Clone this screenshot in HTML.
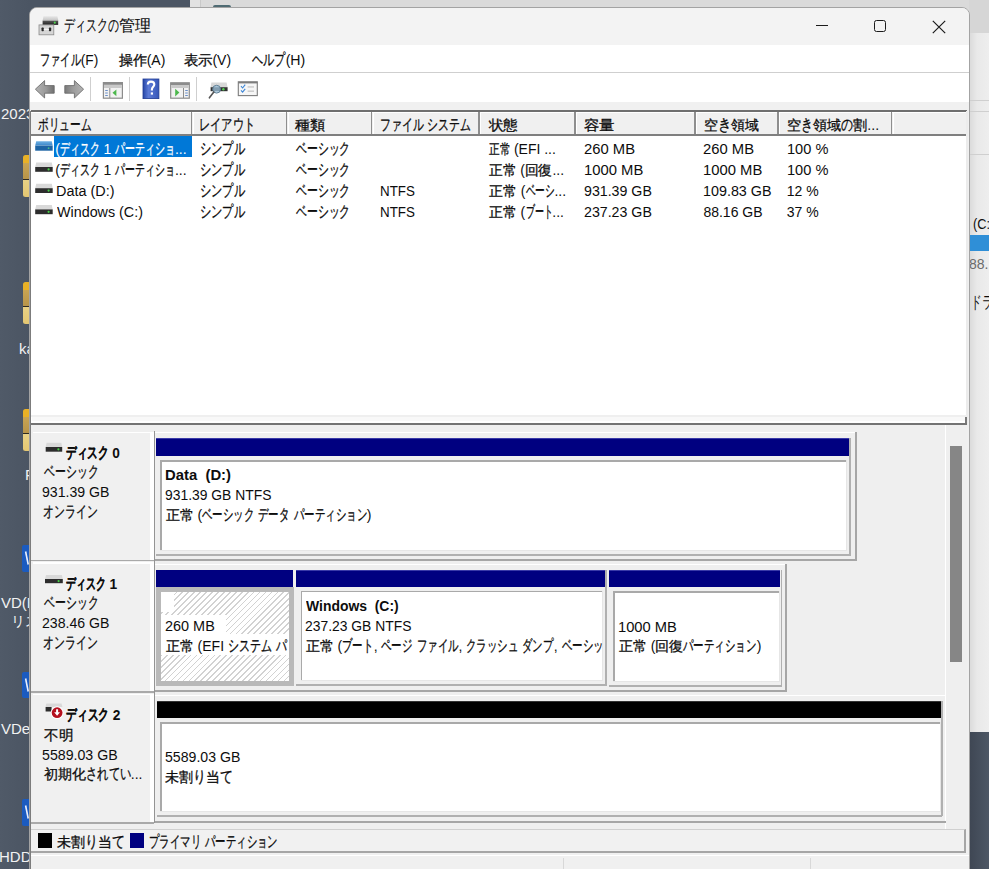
<!DOCTYPE html>
<html><head><meta charset="utf-8">
<style>
*{margin:0;padding:0;box-sizing:border-box}
html,body{width:989px;height:869px;overflow:hidden}
body{position:relative;background:#4b5563;font-family:"Liberation Sans",sans-serif;font-size:14px;color:#000}
.a{position:absolute}
.t{position:absolute;white-space:pre;line-height:1;transform-origin:0 0;color:#0d0d0d}
.dt{color:#f2f2f2;font-size:15px}
.j,.k{-webkit-text-stroke:0.3px currentColor}
.b .j,.b .k{-webkit-text-stroke:0.1px currentColor}
.ns .j,.ns .k{-webkit-text-stroke:0.15px currentColor}
</style></head><body>
<div class="a" style="left:0px;top:0px;width:989px;height:869px;background:linear-gradient(90deg,#505a68 0,#4b5563 30px,#4b5563 100%);"></div>
<div class="a" style="left:190px;top:0px;width:799px;height:33px;background:#dadada;"></div>
<div class="a" style="left:190px;top:0px;width:11px;height:33px;background:#e2e2e2;"></div>
<div class="a" style="left:200px;top:-10px;width:60px;height:43px;background:transparent;border-left:1px solid #c9c9c9;border-top:1px solid #c9c9c9;border-radius:10px 0 0 0"></div>
<div class="a" style="left:213px;top:4.5px;width:18px;height:2.5px;background:#4f6b73;border-radius:2px 2px 0 0"></div>
<div class="a" style="left:969px;top:0px;width:20px;height:33px;background:#d6d6d6;"></div>
<div class="a" style="left:969px;top:33px;width:20px;height:699px;background:linear-gradient(90deg,#d9d9d9 0,#e9e9e9 40%,#eeeeee 100%);"></div>
<div class="a" style="left:969px;top:99.5px;width:20px;height:1.0px;background:#cfcfcf;"></div>
<div class="a" style="left:969px;top:111px;width:20px;height:1px;background:#cfcfcf;"></div>
<div class="a" style="left:969px;top:153.5px;width:20px;height:1.0px;background:#cfcfcf;"></div>
<div class="a" style="left:969px;top:235px;width:20px;height:16px;background:#2f8fd7;"></div>
<div class="a" style="left:22.6px;top:155px;width:8.4px;height:41.5px;background:linear-gradient(180deg,#e9b126 0,#e9b126 19%,#c9a452 19%,#b8954a 56%,#2e2a22 56%,#2e2a22 60%,#e8d185 60%,#e4c772 100%);border-radius:2.5px"></div>
<div class="a" style="left:22.6px;top:282px;width:8.4px;height:41.5px;background:linear-gradient(180deg,#e9b126 0,#e9b126 19%,#c9a452 19%,#b8954a 56%,#2e2a22 56%,#2e2a22 60%,#e8d185 60%,#e4c772 100%);border-radius:2.5px"></div>
<div class="a" style="left:22.6px;top:409px;width:8.4px;height:41.5px;background:linear-gradient(180deg,#e9b126 0,#e9b126 19%,#c9a452 19%,#b8954a 56%,#2e2a22 56%,#2e2a22 60%,#e8d185 60%,#e4c772 100%);border-radius:2.5px"></div>
<div class="a" style="left:22px;top:545px;width:9px;height:27px;background:#1b5bc0;border-radius:2px"></div>
<svg class="a" style="left:22px;top:545px" width="9" height="27"><path d="M3.6 6.5L6.2 19.5" stroke="#e8eefc" stroke-width="1.6"/></svg><div class="a" style="left:22px;top:672px;width:9px;height:26px;background:#1b5bc0;border-radius:2px"></div>
<svg class="a" style="left:22px;top:672px" width="9" height="26"><path d="M3.6 6.5L6.2 19.5" stroke="#e8eefc" stroke-width="1.6"/></svg><div class="a" style="left:22px;top:799px;width:9px;height:27px;background:#1b5bc0;border-radius:2px"></div>
<svg class="a" style="left:22px;top:799px" width="9" height="27"><path d="M3.6 6.5L6.2 19.5" stroke="#e8eefc" stroke-width="1.6"/></svg><div class="t dt" style="left:1px;top:105.6px">2023</div>
<div class="t dt" style="left:19px;top:340.5px">ka</div>
<div class="t dt" style="left:25px;top:467px">F</div>
<div class="t dt" style="left:1px;top:594.5px">VD(E</div>
<div class="t dt" style="left:11px;top:614px;font-size:14px">リス</div>
<div class="t dt" style="left:1px;top:721px">VDe</div>
<div class="t dt" style="left:-1px;top:848.5px">HDD</div>
<div class="t" style="left:972.5px;top:216px;font-size:15px;transform:scaleX(.85)">(C:</div>
<div class="t" style="left:969px;top:256.5px;font-size:14px;color:#6b6b6b">88.1</div>
<div class="t" style="left:970.5px;top:294px;font-size:17px;transform:scaleX(.62)">ドラ</div>
<div class="a" style="left:29px;top:6.5px;width:940.5px;height:873.5px;background:#f0f0f0;border:1px solid #a3a3a3;border-radius:8px 8px 0 0;box-sizing:border-box"></div>
<div class="a" style="left:30px;top:7.5px;width:938.5px;height:37.5px;background:#f3f3f3;border-radius:7px 7px 0 0"></div>
<div class="a" style="left:30px;top:45px;width:938.5px;height:27px;background:#ffffff;"></div>
<div class="a" style="left:30px;top:72.2px;width:938.5px;height:1.7px;background:#cfcfcf;"></div>
<div class="a" style="left:30px;top:73px;width:938.5px;height:29px;background:#ffffff;"></div>
<div class="a" style="left:90px;top:76.5px;width:1px;height:24.0px;background:#cfcfcf;"></div>
<div class="a" style="left:129px;top:76.5px;width:1px;height:24.0px;background:#cfcfcf;"></div>
<div class="a" style="left:196px;top:76.5px;width:1px;height:24.0px;background:#cfcfcf;"></div>
<div class="a" style="left:30px;top:102px;width:938.5px;height:8px;background:#f0f0f0;"></div>
<div class="a" style="left:30.5px;top:110px;width:936.0px;height:314.8px;background:#ffffff;"></div>
<div class="a" style="left:30.5px;top:110px;width:936.0px;height:2px;background:#6f6f6f;"></div>
<div class="a" style="left:30.5px;top:112px;width:936.0px;height:21.7px;background:#f0f0f0;"></div>
<div class="a" style="left:30.5px;top:112.4px;width:936.0px;height:1.0px;background:#ffffff;"></div>
<div class="a" style="left:30.5px;top:133.7px;width:936.0px;height:1.9px;background:#7f7f7f;"></div>
<div class="a" style="left:966.0px;top:110.5px;width:2.0px;height:314.3px;background:#ececec;"></div>
<div class="a" style="left:965.0px;top:417px;width:1.5px;height:7.8px;background:#7a7a7a;"></div>
<div class="a" style="left:190.7px;top:112px;width:1.8px;height:21.7px;background:#8e8e8e;"></div>
<div class="a" style="left:192.5px;top:112px;width:1.2px;height:21.7px;background:#ffffff;"></div>
<div class="a" style="left:285.7px;top:112px;width:1.8px;height:21.7px;background:#8e8e8e;"></div>
<div class="a" style="left:287.5px;top:112px;width:1.2px;height:21.7px;background:#ffffff;"></div>
<div class="a" style="left:370.7px;top:112px;width:1.8px;height:21.7px;background:#8e8e8e;"></div>
<div class="a" style="left:372.5px;top:112px;width:1.2px;height:21.7px;background:#ffffff;"></div>
<div class="a" style="left:478.2px;top:112px;width:1.8px;height:21.7px;background:#8e8e8e;"></div>
<div class="a" style="left:480px;top:112px;width:1.2px;height:21.7px;background:#ffffff;"></div>
<div class="a" style="left:574.2px;top:112px;width:1.8px;height:21.7px;background:#8e8e8e;"></div>
<div class="a" style="left:576px;top:112px;width:1.2px;height:21.7px;background:#ffffff;"></div>
<div class="a" style="left:694.2px;top:112px;width:1.8px;height:21.7px;background:#8e8e8e;"></div>
<div class="a" style="left:696px;top:112px;width:1.2px;height:21.7px;background:#ffffff;"></div>
<div class="a" style="left:777.2px;top:112px;width:1.8px;height:21.7px;background:#8e8e8e;"></div>
<div class="a" style="left:779px;top:112px;width:1.2px;height:21.7px;background:#ffffff;"></div>
<div class="a" style="left:890.7px;top:112px;width:1.8px;height:21.7px;background:#8e8e8e;"></div>
<div class="a" style="left:892.5px;top:112px;width:1.2px;height:21.7px;background:#ffffff;"></div>
<div class="a" style="left:54.2px;top:136.3px;width:138.0px;height:20.7px;background:#0078d7;"></div>
<div class="a" style="left:30.5px;top:415.2px;width:936.0px;height:2.0px;background:#efefef;"></div>
<div class="a" style="left:32.0px;top:417.2px;width:933.0px;height:4.3px;background:#f8f8f8;"></div>
<div class="a" style="left:30.5px;top:422.5px;width:936.0px;height:2.3px;background:#737373;"></div>
<div class="a" style="left:30.5px;top:424.8px;width:936.0px;height:404.2px;background:#efefef;"></div>
<div class="a" style="left:945.2px;top:425px;width:1.0px;height:404px;background:#ffffff;"></div>
<div class="a" style="left:950.2px;top:446px;width:11.6px;height:216px;background:#868686;"></div>
<div class="a" style="left:33px;top:432px;width:117.4px;height:128.5px;background:#f0f0f0;"></div>
<div class="a" style="left:33px;top:431.5px;width:121px;height:1.5px;background:#ffffff;"></div>
<div class="a" style="left:150.4px;top:432px;width:3.4px;height:128.5px;background:#ffffff;"></div>
<div class="a" style="left:31px;top:559.5px;width:123px;height:1.5px;background:#a9a9a9;"></div>
<div class="a" style="left:154px;top:432px;width:703px;height:1px;background:#ffffff;"></div>
<div class="a" style="left:154px;top:432px;width:1px;height:129px;background:#ffffff;"></div>
<div class="a" style="left:855px;top:432px;width:2px;height:129px;background:#a6a6a6;"></div>
<div class="a" style="left:154px;top:559px;width:703px;height:2px;background:#a6a6a6;"></div>
<div class="a" style="left:156.3px;top:438px;width:693.0px;height:18px;background:#000080;"></div>
<div class="a" style="left:156.3px;top:438px;width:693.0px;height:1px;background:#3a3aa8;"></div>
<div class="a" style="left:849.3px;top:438px;width:1.5px;height:117px;background:#b0b0b0;"></div>
<div class="a" style="left:156.3px;top:554px;width:694.5px;height:1.5px;background:#b0b0b0;"></div>
<div class="a" style="left:160px;top:460px;width:687px;height:91px;background:#ffffff;"></div>
<div class="a" style="left:160px;top:460px;width:687px;height:1.5px;background:#a9a9a9;"></div>
<div class="a" style="left:160px;top:460px;width:1.5px;height:91px;background:#a9a9a9;"></div>
<div class="a" style="left:846px;top:460px;width:1px;height:91px;background:#e6e6e6;"></div>
<div class="a" style="left:160px;top:550px;width:687px;height:1px;background:#e6e6e6;"></div>
<div class="a" style="left:33px;top:562.5px;width:117.4px;height:129.5px;background:#f0f0f0;"></div>
<div class="a" style="left:33px;top:562.0px;width:121px;height:1.5px;background:#ffffff;"></div>
<div class="a" style="left:150.4px;top:562.5px;width:3.4px;height:129.5px;background:#ffffff;"></div>
<div class="a" style="left:31px;top:691px;width:123px;height:1.5px;background:#a9a9a9;"></div>
<div class="a" style="left:154px;top:564px;width:632.5px;height:1px;background:#ffffff;"></div>
<div class="a" style="left:154px;top:564px;width:1px;height:128px;background:#ffffff;"></div>
<div class="a" style="left:784.5px;top:564px;width:2.0px;height:128px;background:#a6a6a6;"></div>
<div class="a" style="left:154px;top:690px;width:632.5px;height:2px;background:#a6a6a6;"></div>
<div class="a" style="left:296.3px;top:570px;width:308.9px;height:17px;background:#000080;"></div>
<div class="a" style="left:296.3px;top:570px;width:308.9px;height:1px;background:#3a3aa8;"></div>
<div class="a" style="left:605.2px;top:570px;width:1.5px;height:115.3px;background:#b0b0b0;"></div>
<div class="a" style="left:296.3px;top:684.3px;width:310.4px;height:1.5px;background:#b0b0b0;"></div>
<div class="a" style="left:300.6px;top:590.8px;width:302.4px;height:90.5px;background:#ffffff;"></div>
<div class="a" style="left:300.6px;top:590.8px;width:302.4px;height:1.5px;background:#a9a9a9;"></div>
<div class="a" style="left:300.6px;top:590.8px;width:1.5px;height:90.5px;background:#a9a9a9;"></div>
<div class="a" style="left:602px;top:590.8px;width:1px;height:90.5px;background:#e6e6e6;"></div>
<div class="a" style="left:300.6px;top:680.3px;width:302.4px;height:1.0px;background:#e6e6e6;"></div>
<div class="a" style="left:608.9px;top:570px;width:171.6px;height:17px;background:#000080;"></div>
<div class="a" style="left:608.9px;top:570px;width:171.6px;height:1px;background:#3a3aa8;"></div>
<div class="a" style="left:780.5px;top:570px;width:1.5px;height:116.2px;background:#b0b0b0;"></div>
<div class="a" style="left:608.9px;top:685.2px;width:173.1px;height:1.5px;background:#b0b0b0;"></div>
<div class="a" style="left:613.1px;top:591px;width:166.6px;height:91.2px;background:#ffffff;"></div>
<div class="a" style="left:613.1px;top:591px;width:166.6px;height:1.5px;background:#a9a9a9;"></div>
<div class="a" style="left:613.1px;top:591px;width:1.5px;height:91.2px;background:#a9a9a9;"></div>
<div class="a" style="left:778.7px;top:591px;width:1.0px;height:91.2px;background:#e6e6e6;"></div>
<div class="a" style="left:613.1px;top:681.2px;width:166.6px;height:1.0px;background:#e6e6e6;"></div>
<div class="a" style="left:156.1px;top:570px;width:136.5px;height:17px;background:#000080;"></div>
<div class="a" style="left:156px;top:587px;width:137.6px;height:99px;background:#b9b9b9;"></div>
<div class="a" style="left:161px;top:592.2px;width:128.4px;height:88.5px;background:repeating-linear-gradient(-45deg,#ffffff 0,#ffffff 3px,#d2d2d2 3px,#d2d2d2 4.2px);"></div>
<div class="a" style="left:161px;top:592.2px;width:13px;height:19.8px;background:#ffffff;"></div>
<div class="a" style="left:161px;top:614.6px;width:65px;height:19.7px;background:#ffffff;"></div>
<div class="a" style="left:161px;top:634.3px;width:128.4px;height:21.2px;background:#ffffff;"></div>
<div class="a" style="left:33px;top:694px;width:117.4px;height:129px;background:#f0f0f0;"></div>
<div class="a" style="left:33px;top:693.5px;width:121px;height:1.5px;background:#ffffff;"></div>
<div class="a" style="left:150.4px;top:694px;width:3.4px;height:129px;background:#ffffff;"></div>
<div class="a" style="left:31px;top:822px;width:123px;height:1.5px;background:#a9a9a9;"></div>
<div class="a" style="left:154px;top:695px;width:792px;height:1px;background:#ffffff;"></div>
<div class="a" style="left:154px;top:695px;width:1px;height:128px;background:#ffffff;"></div>
<div class="a" style="left:154px;top:821px;width:792px;height:2px;background:#a6a6a6;"></div>
<div class="a" style="left:156.7px;top:701px;width:784.3px;height:17.4px;background:#000;"></div>
<div class="a" style="left:156.7px;top:701px;width:784.3px;height:1px;background:#333;"></div>
<div class="a" style="left:941px;top:701px;width:1.5px;height:115.2px;background:#b0b0b0;"></div>
<div class="a" style="left:156.7px;top:815.2px;width:785.8px;height:1.5px;background:#b0b0b0;"></div>
<div class="a" style="left:160.1px;top:722px;width:780.9px;height:90.2px;background:#ffffff;"></div>
<div class="a" style="left:160.1px;top:722px;width:780.9px;height:1.5px;background:#a9a9a9;"></div>
<div class="a" style="left:160.1px;top:722px;width:1.5px;height:90.2px;background:#a9a9a9;"></div>
<div class="a" style="left:940px;top:722px;width:1px;height:90.2px;background:#e6e6e6;"></div>
<div class="a" style="left:160.1px;top:811.2px;width:780.9px;height:1.0px;background:#e6e6e6;"></div>
<div class="a" style="left:154px;top:431px;width:1.1px;height:392px;background:#949494;"></div>
<div class="a" style="left:30.5px;top:829.4px;width:935.0px;height:23.6px;background:#f1f1f1;border-top:1px solid #d0d0d0;border-right:2px solid #a6a6a6;border-bottom:2px solid #a6a6a6;box-sizing:border-box"></div>
<div class="a" style="left:37.9px;top:832.5px;width:14.4px;height:15.8px;background:#000000;"></div>
<div class="a" style="left:130.4px;top:832.5px;width:14.0px;height:15.8px;background:#000080;"></div>
<div class="a" style="left:30px;top:853px;width:938.5px;height:16px;background:#f0f0f0;"></div>
<div class="a" style="left:30px;top:855px;width:938.5px;height:1px;background:#ffffff;"></div>
<div class="a" style="left:563px;top:858px;width:1px;height:11px;background:#d8d8d8;"></div>
<div class="a" style="left:810px;top:858px;width:1px;height:11px;background:#d8d8d8;"></div>
<div class="a" style="left:969.5px;top:732px;width:19.5px;height:137px;background:linear-gradient(90deg,#3f4754 0,#4d5765 100%);"></div>
<div class="a" style="left:29.5px;top:110.5px;width:1.7px;height:758.5px;background:#7c7c7c;"></div>
<div class="a" style="left:816px;top:25px;width:12.2px;height:1px;background:#1b1b1b;"></div>
<div class="a" style="left:874px;top:20px;width:12px;height:12px;background:transparent;border:1.2px solid #1b1b1b;border-radius:2.5px;box-sizing:border-box"></div>
<svg class="a" style="left:932px;top:19.5px" width="14" height="14" viewBox="0 0 14 14"><path d="M0.8 0.8L13.2 13.2M13.2 0.8L0.8 13.2" stroke="#1b1b1b" stroke-width="1.2"/></svg>

<!-- title icon -->
<svg class="a" style="left:38px;top:15px" width="22" height="21" viewBox="38 15 22 21">
 <defs><linearGradient id="dtop" x1="0" y1="0" x2="0" y2="1"><stop offset="0" stop-color="#e6e6e6"/><stop offset="1" stop-color="#c4c4c4"/></linearGradient>
 <linearGradient id="dband" x1="0" y1="0" x2="0" y2="1"><stop offset="0" stop-color="#5a5a5a"/><stop offset="1" stop-color="#222"/></linearGradient></defs>
 <path d="M43.5 16.2H57.4L58.3 20.6H42.6Z" fill="url(#dtop)"/>
 <rect x="42.6" y="20.6" width="15.6" height="4.3" fill="url(#dband)"/>
 <circle cx="54.8" cy="22.7" r="1.1" fill="#4fd04f"/>
 <rect x="39" y="24.9" width="14.8" height="9.9" fill="#d6d6d6" stroke="#8a8a8a" stroke-width="0.8"/>
 <rect x="41.5" y="27.4" width="2.3" height="3.8" rx="0.8" fill="#2a2a2a"/>
 <rect x="48.9" y="27.4" width="2.3" height="3.8" rx="0.8" fill="#2a2a2a"/>
 <rect x="43.8" y="28.8" width="5.1" height="1.2" fill="#f4f4f4"/>
</svg>
<!-- back/forward arrows -->
<svg class="a" style="left:33px;top:78px" width="54" height="23" viewBox="33 78 54 23">
 <defs>
 <linearGradient id="arrb" x1="35" y1="0" x2="55" y2="0" gradientUnits="userSpaceOnUse"><stop offset="0" stop-color="#b4b4b4"/><stop offset="0.55" stop-color="#9a9a9a"/><stop offset="1" stop-color="#6c6c6c"/></linearGradient>
 <linearGradient id="arrf" x1="64" y1="0" x2="84" y2="0" gradientUnits="userSpaceOnUse"><stop offset="0" stop-color="#777"/><stop offset="0.45" stop-color="#9c9c9c"/><stop offset="1" stop-color="#b4b4b4"/></linearGradient>
 </defs>
 <path d="M35.4 89.2L44.6 80.6V85.6H54.2V93.2H44.6V98Z" fill="url(#arrb)" stroke="#6e6e6e" stroke-width="0.9" stroke-linejoin="round"/>
 <path d="M83.6 89.2L74.4 80.6V85.6H64.8V93.2H74.4V98Z" fill="url(#arrf)" stroke="#6e6e6e" stroke-width="0.9" stroke-linejoin="round"/>
</svg>
<!-- icon: show console tree -->
<svg class="a" style="left:102px;top:81px" width="22" height="19" viewBox="102 81 22 19">
 <rect x="103.4" y="82.6" width="19" height="15.6" fill="#f2f2f2" stroke="#8c8c8c" stroke-width="1.2"/>
 <rect x="103.4" y="82.6" width="19" height="2.2" fill="#8c8c8c"/>
 <rect x="104" y="85" width="17.8" height="3" fill="#c9c9c9"/>
 <rect x="109.3" y="88" width="1" height="10" fill="#8c8c8c"/>
 <rect x="105.2" y="90" width="2.6" height="1" fill="#6b8fc7"/><rect x="105.2" y="92.5" width="2.6" height="1" fill="#6b8fc7"/><rect x="105.2" y="95" width="2.6" height="1" fill="#6b8fc7"/>
 <path d="M116.4 89.4V96.2L112.5 92.8Z" fill="#4cb84c"/>
</svg>
<!-- help -->
<svg class="a" style="left:142px;top:78px" width="18" height="22" viewBox="142 78 18 22">
 <defs><linearGradient id="hlp" x1="0" y1="0" x2="1" y2="0"><stop offset="0" stop-color="#2546a8"/><stop offset="0.35" stop-color="#5d7bd6"/><stop offset="1" stop-color="#3556b8"/></linearGradient></defs>
 <rect x="143" y="79" width="15.9" height="19.6" fill="url(#hlp)" stroke="#1f3a92" stroke-width="0.8"/>
 <path d="M147.8 84.6C147.8 82.4 149.3 81.6 151 81.6C152.9 81.6 154.3 82.7 154.3 84.5C154.3 86.6 151.9 87 151.9 89.4V90.6" fill="none" stroke="#fff" stroke-width="2.1"/>
 <rect x="150.8" y="92.4" width="2.2" height="2.2" fill="#fff"/>
</svg>
<!-- show action pane -->
<svg class="a" style="left:169px;top:81px" width="22" height="19" viewBox="169 81 22 19">
 <rect x="170.7" y="82.8" width="18.6" height="15.4" fill="#f2f2f2" stroke="#8c8c8c" stroke-width="1.2"/>
 <rect x="170.7" y="82.8" width="18.6" height="2.2" fill="#8c8c8c"/>
 <rect x="171.3" y="85" width="17.4" height="3" fill="#c9c9c9"/>
 <rect x="183" y="88" width="1" height="10" fill="#8c8c8c"/>
 <rect x="185.2" y="90" width="2.6" height="1" fill="#6b8fc7"/><rect x="185.2" y="92.5" width="2.6" height="1" fill="#6b8fc7"/><rect x="185.2" y="95" width="2.6" height="1" fill="#6b8fc7"/>
 <path d="M175.2 88.8V96.4L179.4 92.6Z" fill="#4cb84c"/>
</svg>
<!-- disk + magnifier -->
<svg class="a" style="left:207px;top:80px" width="23" height="20" viewBox="207 80 23 20">
 <path d="M211.4 82.6H226.6L227.6 87.2H210.6Z" fill="#d8d8d8"/>
 <rect x="210.6" y="87.2" width="17" height="4" fill="#333"/>
 <circle cx="223.4" cy="89.2" r="1.2" fill="#52d052"/>
 <circle cx="216.6" cy="89.2" r="3.9" fill="#9fc3dc" fill-opacity="0.75" stroke="#5f7f95" stroke-width="1"/>
 <path d="M213.8 92L209.4 97.8" stroke="#555" stroke-width="1.6" stroke-linecap="round"/>
</svg>
<!-- checklist -->
<svg class="a" style="left:236px;top:80px" width="23" height="18" viewBox="236 80 23 18">
 <rect x="238.3" y="81.8" width="19" height="13.8" fill="#f6f6f6" stroke="#7c7c7c" stroke-width="1.1"/>
 <rect x="238.3" y="81.8" width="19" height="1.6" fill="#7c7c7c"/>
 <path d="M241 86.2L242.6 88L245.2 84.6M241 90.4L242.6 92.2L245.2 88.8" fill="none" stroke="#3d86d6" stroke-width="1.1"/>
 <rect x="247.6" y="86.4" width="6.4" height="1.1" fill="#bdbdbd"/><rect x="247.6" y="90.6" width="6.4" height="1.1" fill="#bdbdbd"/>
</svg>
<!-- list row icons -->
<svg class="a" style="left:34px;top:139px" width="20" height="80" viewBox="34 139 20 80">
 <defs><linearGradient id="bt" x1="0" y1="0" x2="0" y2="1"><stop offset="0" stop-color="#6fb1e4"/><stop offset="1" stop-color="#3b86c8"/></linearGradient></defs>
 <path d="M36.2 141.2H51.8L52.7 145.6H35.2Z" fill="url(#bt)"/>
 <rect x="35.2" y="145.6" width="17.5" height="5.1" fill="#1e64a4"/>
 <circle cx="48.6" cy="148.2" r="0.9" fill="#49c08a"/>
 <path d="M36.2 162.6H51.8L52.7 167H35.2Z" fill="#d9d9d9"/>
 <rect x="35.2" y="167" width="17.5" height="4.8" fill="#2d2d2d"/>
 <circle cx="48.6" cy="169.4" r="1.1" fill="#46d046"/>
 <path d="M36.2 183.8H51.8L52.7 188.2H35.2Z" fill="#d9d9d9"/>
 <rect x="35.2" y="188.2" width="17.5" height="4.8" fill="#2d2d2d"/>
 <circle cx="48.6" cy="190.6" r="1.1" fill="#46d046"/>
 <path d="M36.2 205H51.8L52.7 209.4H35.2Z" fill="#d9d9d9"/>
 <rect x="35.2" y="209.4" width="17.5" height="4.8" fill="#2d2d2d"/>
 <circle cx="48.6" cy="211.8" r="1.1" fill="#46d046"/>
</svg>
<!-- disk label icons -->
<svg class="a" style="left:44px;top:441px" width="20" height="12" viewBox="44 441 20 12">
 <path d="M46.6 442.7H61.3L62.2 447H45.7Z" fill="#d9d9d9"/>
 <rect x="45.7" y="447" width="16.5" height="4.7" fill="#2d2d2d"/>
 <circle cx="58.4" cy="449.3" r="1.1" fill="#46d046"/>
</svg>
<svg class="a" style="left:44px;top:573px" width="20" height="12" viewBox="44 573 20 12">
 <path d="M46 575H61.9L62.8 579H45Z" fill="#d9d9d9"/>
 <rect x="45" y="579" width="17.8" height="4.2" fill="#2d2d2d"/>
 <circle cx="58.6" cy="581.1" r="1.1" fill="#46d046"/>
</svg>
<svg class="a" style="left:44px;top:702px" width="22" height="20" viewBox="44 702 22 20">
 <path d="M46.3 703.6H61.6L62.4 707H45.5Z" fill="#d9d9d9"/>
 <rect x="45.6" y="707" width="6" height="4.5" fill="#2d2d2d"/>
 <circle cx="57.1" cy="712.7" r="6.4" fill="#fff"/>
 <circle cx="57.1" cy="712.7" r="5.4" fill="#b5101e"/>
 <path d="M56.1 709.2H58.1V712.2H60L57.1 715.8L54.2 712.2H56.1Z" fill="#fff"/>
</svg>

<div class="t ns" style="left:64.00px;top:17.20px;font-size:14px;"><span class='j' style='font-size:1.2229em;display:inline-block;transform:scaleX(0.6459);transform-origin:0 0;margin-right:-30.10px'>ディスクの</span><span class='k' style='font-size:1.1082em;display:inline-block;transform:scaleX(1.0000);transform-origin:0 0;margin-right:-0.00px'>管理</span></div>
<div class="t" style="left:40.22px;top:52.20px;font-size:14.0px;transform:scaleX(0.9776);"><span class='j' style='font-size:1.1429em;display:inline-block;transform:scaleX(0.6516);transform-origin:0 0;margin-right:-22.30px'>ファイル</span>(F)</div>
<div class="t" style="left:118.50px;top:53.20px;font-size:14.0px;"><span class='k' style='font-size:1.0357em;display:inline-block;transform:scaleX(1.0071);transform-origin:0 0;margin-right:0.20px'>操作</span>(A)</div>
<div class="t" style="left:183.50px;top:53.20px;font-size:14.0px;"><span class='k' style='font-size:1.0357em;display:inline-block;transform:scaleX(1.0321);transform-origin:0 0;margin-right:0.90px'>表示</span>(V)</div>
<div class="t" style="left:251.60px;top:52.20px;font-size:14.0px;transform:scaleX(1.0077);"><span class='j' style='font-size:1.1429em;display:inline-block;transform:scaleX(0.6958);transform-origin:0 0;margin-right:-14.60px'>ヘルプ</span>(H)</div>
<div class="t" style="left:38.11px;top:116.80px;font-size:14.0px;transform:scaleX(0.9923);"><span class='j' style='font-size:1.1429em;display:inline-block;transform:scaleX(0.6700);transform-origin:0 0;margin-right:-26.40px'>ボリューム</span></div>
<div class="t" style="left:199.15px;top:116.80px;font-size:14.0px;transform:scaleX(0.9736);"><span class='j' style='font-size:1.1429em;display:inline-block;transform:scaleX(0.7200);transform-origin:0 0;margin-right:-22.40px'>レイアウト</span></div>
<div class="t" style="left:295.20px;top:117.80px;font-size:14.0px;transform:scaleX(1.0103);"><span class='k' style='font-size:1.0357em;display:inline-block;transform:scaleX(1.0821);transform-origin:0 0;margin-right:2.30px'>種類</span></div>
<div class="t" style="left:380.11px;top:116.80px;font-size:14.0px;transform:scaleX(0.9889);"><span class='j' style='font-size:1.1429em;display:inline-block;transform:scaleX(0.6875);transform-origin:0 0;margin-right:-20.00px'>ファイル</span> <span class='j' style='font-size:1.1429em;display:inline-block;transform:scaleX(0.6875);transform-origin:0 0;margin-right:-20.00px'>システム</span></div>
<div class="t" style="left:488.70px;top:117.80px;font-size:14.0px;"><span class='k' style='font-size:1.0357em;display:inline-block;transform:scaleX(1.0357);transform-origin:0 0;margin-right:1.00px'>状態</span></div>
<div class="t" style="left:583.60px;top:117.80px;font-size:14.0px;"><span class='k' style='font-size:1.0357em;display:inline-block;transform:scaleX(1.1036);transform-origin:0 0;margin-right:2.90px'>容量</span></div>
<div class="t" style="left:703.51px;top:116.80px;font-size:14.0px;transform:scaleX(0.9927);"><span class='k' style='font-size:1.0357em;display:inline-block;transform:scaleX(1.0000);transform-origin:0 0;margin-right:-0.00px'>空</span><span class='j' style='font-size:1.1429em;display:inline-block;transform:scaleX(0.8500);transform-origin:0 0;margin-right:-2.40px'>き</span><span class='k' style='font-size:1.0357em;display:inline-block;transform:scaleX(1.0000);transform-origin:0 0;margin-right:-0.00px'>領域</span></div>
<div class="t" style="left:786.69px;top:116.80px;font-size:14.0px;transform:scaleX(1.0079);"><span class='k' style='font-size:1.0357em;display:inline-block;transform:scaleX(1.0000);transform-origin:0 0;margin-right:-0.00px'>空</span><span class='j' style='font-size:1.1429em;display:inline-block;transform:scaleX(0.7406);transform-origin:0 0;margin-right:-4.15px'>き</span><span class='k' style='font-size:1.0357em;display:inline-block;transform:scaleX(1.0000);transform-origin:0 0;margin-right:-0.00px'>領域</span><span class='j' style='font-size:1.1429em;display:inline-block;transform:scaleX(0.7406);transform-origin:0 0;margin-right:-4.15px'>の</span><span class='k' style='font-size:1.0357em;display:inline-block;transform:scaleX(1.0000);transform-origin:0 0;margin-right:-0.00px'>割</span>...</div>
<div class="t" style="left:55.30px;top:140.50px;font-size:14.0px;color:#fff;">(<span class='j' style='font-size:1.1429em;display:inline-block;transform:scaleX(0.6213);transform-origin:0 0;margin-right:-24.24px'>ディスク</span> 1 <span class='j' style='font-size:1.1429em;display:inline-block;transform:scaleX(0.6213);transform-origin:0 0;margin-right:-36.36px'>パーティショ</span>...</div>
<div class="t" style="left:200.11px;top:140.50px;font-size:14.0px;transform:scaleX(0.9886);"><span class='j' style='font-size:1.1429em;display:inline-block;transform:scaleX(0.7109);transform-origin:0 0;margin-right:-18.50px'>シンプル</span></div>
<div class="t" style="left:295.50px;top:140.50px;font-size:14.0px;transform:scaleX(0.9500);"><span class='j' style='font-size:1.1429em;display:inline-block;transform:scaleX(0.7150);transform-origin:0 0;margin-right:-22.80px'>ベーシック</span></div>
<div class="t" style="left:488.70px;top:141.50px;font-size:14.0px;"><span class='k' style='font-size:1.0357em;display:inline-block;transform:scaleX(0.7607);transform-origin:0 0;margin-right:-6.70px'>正常</span> (EFI ...</div>
<div class="t" style="left:583.54px;top:141.50px;font-size:14.0px;transform:scaleX(1.0574);">260 MB</div>
<div class="t" style="left:703.34px;top:141.50px;font-size:14.0px;transform:scaleX(1.0574);">260 MB</div>
<div class="t" style="left:786.66px;top:141.50px;font-size:14.0px;transform:scaleX(1.0421);">100 %</div>
<div class="t" style="left:55.30px;top:161.80px;font-size:14.0px;">(<span class='j' style='font-size:1.1429em;display:inline-block;transform:scaleX(0.6213);transform-origin:0 0;margin-right:-24.24px'>ディスク</span> 1 <span class='j' style='font-size:1.1429em;display:inline-block;transform:scaleX(0.6213);transform-origin:0 0;margin-right:-36.36px'>パーティショ</span>...</div>
<div class="t" style="left:200.11px;top:161.80px;font-size:14.0px;transform:scaleX(0.9886);"><span class='j' style='font-size:1.1429em;display:inline-block;transform:scaleX(0.7109);transform-origin:0 0;margin-right:-18.50px'>シンプル</span></div>
<div class="t" style="left:295.50px;top:161.80px;font-size:14.0px;transform:scaleX(0.9500);"><span class='j' style='font-size:1.1429em;display:inline-block;transform:scaleX(0.7150);transform-origin:0 0;margin-right:-22.80px'>ベーシック</span></div>
<div class="t" style="left:488.70px;top:162.80px;font-size:14.0px;transform:scaleX(0.9920);"><span class='k' style='font-size:1.0357em;display:inline-block;transform:scaleX(0.9893);transform-origin:0 0;margin-right:-0.30px'>正常</span> (<span class='k' style='font-size:1.0357em;display:inline-block;transform:scaleX(0.9893);transform-origin:0 0;margin-right:-0.30px'>回復</span>...</div>
<div class="t" style="left:583.54px;top:162.80px;font-size:14.0px;transform:scaleX(1.0582);">1000 MB</div>
<div class="t" style="left:703.34px;top:162.80px;font-size:14.0px;transform:scaleX(1.0582);">1000 MB</div>
<div class="t" style="left:786.66px;top:162.80px;font-size:14.0px;transform:scaleX(1.0421);">100 %</div>
<div class="t" style="left:56.27px;top:184.00px;font-size:14.0px;transform:scaleX(1.0291);">Data (D:)</div>
<div class="t" style="left:200.11px;top:183.00px;font-size:14.0px;transform:scaleX(0.9886);"><span class='j' style='font-size:1.1429em;display:inline-block;transform:scaleX(0.7109);transform-origin:0 0;margin-right:-18.50px'>シンプル</span></div>
<div class="t" style="left:295.50px;top:183.00px;font-size:14.0px;transform:scaleX(0.9500);"><span class='j' style='font-size:1.1429em;display:inline-block;transform:scaleX(0.7150);transform-origin:0 0;margin-right:-22.80px'>ベーシック</span></div>
<div class="t" style="left:380.15px;top:184.00px;font-size:14.0px;transform:scaleX(0.9543);">NTFS</div>
<div class="t" style="left:488.70px;top:183.00px;font-size:14.0px;transform:scaleX(0.9922);"><span class='k' style='font-size:1.0357em;display:inline-block;transform:scaleX(1.0000);transform-origin:0 0;margin-right:-0.00px'>正常</span> (<span class='j' style='font-size:1.1429em;display:inline-block;transform:scaleX(0.6125);transform-origin:0 0;margin-right:-18.60px'>ベーシ</span>...</div>
<div class="t" style="left:583.59px;top:184.00px;font-size:14.0px;transform:scaleX(1.0138);">931.39 GB</div>
<div class="t" style="left:703.38px;top:184.00px;font-size:14.0px;transform:scaleX(1.0231);">109.83 GB</div>
<div class="t" style="left:786.70px;top:184.00px;font-size:14.0px;">12 %</div>
<div class="t" style="left:57.30px;top:205.20px;font-size:14.0px;transform:scaleX(1.0229);">Windows (C:)</div>
<div class="t" style="left:200.11px;top:204.20px;font-size:14.0px;transform:scaleX(0.9886);"><span class='j' style='font-size:1.1429em;display:inline-block;transform:scaleX(0.7109);transform-origin:0 0;margin-right:-18.50px'>シンプル</span></div>
<div class="t" style="left:295.50px;top:204.20px;font-size:14.0px;transform:scaleX(0.9500);"><span class='j' style='font-size:1.1429em;display:inline-block;transform:scaleX(0.7150);transform-origin:0 0;margin-right:-22.80px'>ベーシック</span></div>
<div class="t" style="left:380.15px;top:205.20px;font-size:14.0px;transform:scaleX(0.9543);">NTFS</div>
<div class="t" style="left:488.70px;top:204.20px;font-size:14.0px;transform:scaleX(0.9907);"><span class='k' style='font-size:1.0357em;display:inline-block;transform:scaleX(1.0000);transform-origin:0 0;margin-right:-0.00px'>正常</span> (<span class='j' style='font-size:1.1429em;display:inline-block;transform:scaleX(0.5687);transform-origin:0 0;margin-right:-20.70px'>ブート</span>...</div>
<div class="t" style="left:583.59px;top:205.20px;font-size:14.0px;transform:scaleX(1.0138);">237.23 GB</div>
<div class="t" style="left:703.40px;top:205.20px;font-size:14.0px;">88.16 GB</div>
<div class="t" style="left:786.70px;top:205.20px;font-size:14.0px;">37 %</div>
<div class="t b" style="left:65.70px;top:444.50px;font-size:14.0px;font-weight:bold;transform:scaleX(0.9745);"><span class='j' style='font-size:1.1429em;display:inline-block;transform:scaleX(0.6813);transform-origin:0 0;margin-right:-20.40px'>ディスク</span> 0</div>
<div class="t" style="left:43.50px;top:464.30px;font-size:14.0px;transform:scaleX(0.9685);"><span class='j' style='font-size:1.1429em;display:inline-block;transform:scaleX(0.7037);transform-origin:0 0;margin-right:-23.70px'>ベーシック</span></div>
<div class="t" style="left:42.49px;top:485.10px;font-size:14.0px;transform:scaleX(1.0077);">931.39 GB</div>
<div class="t" style="left:42.51px;top:503.90px;font-size:14.0px;transform:scaleX(0.9868);"><span class='j' style='font-size:1.1429em;display:inline-block;transform:scaleX(0.6912);transform-origin:0 0;margin-right:-24.70px'>オンライン</span></div>
<div class="t b" style="left:65.70px;top:575.50px;font-size:14.0px;font-weight:bold;transform:scaleX(0.9865);"><span class='j' style='font-size:1.1429em;display:inline-block;transform:scaleX(0.6297);transform-origin:0 0;margin-right:-23.70px'>ディスク</span> 1</div>
<div class="t" style="left:43.50px;top:595.30px;font-size:14.0px;transform:scaleX(0.9685);"><span class='j' style='font-size:1.1429em;display:inline-block;transform:scaleX(0.7037);transform-origin:0 0;margin-right:-23.70px'>ベーシック</span></div>
<div class="t" style="left:42.49px;top:616.10px;font-size:14.0px;transform:scaleX(1.0077);">238.46 GB</div>
<div class="t" style="left:42.51px;top:634.90px;font-size:14.0px;transform:scaleX(0.9868);"><span class='j' style='font-size:1.1429em;display:inline-block;transform:scaleX(0.6912);transform-origin:0 0;margin-right:-24.70px'>オンライン</span></div>
<div class="t b" style="left:65.70px;top:707.00px;font-size:14.0px;font-weight:bold;transform:scaleX(0.9800);"><span class='j' style='font-size:1.1429em;display:inline-block;transform:scaleX(0.6859);transform-origin:0 0;margin-right:-20.10px'>ディスク</span> 2</div>
<div class="t" style="left:43.50px;top:727.80px;font-size:14.0px;"><span class='k' style='font-size:1.0357em;display:inline-block;transform:scaleX(1.0393);transform-origin:0 0;margin-right:1.10px'>不明</span></div>
<div class="t" style="left:42.49px;top:747.60px;font-size:14.0px;transform:scaleX(1.0123);">5589.03 GB</div>
<div class="t" style="left:43.50px;top:766.40px;font-size:14.0px;"><span class='k' style='font-size:1.0357em;display:inline-block;transform:scaleX(1.0000);transform-origin:0 0;margin-right:-0.00px'>初期化</span><span class='j' style='font-size:1.1429em;display:inline-block;transform:scaleX(0.7078);transform-origin:0 0;margin-right:-18.70px'>されてい</span>...</div>
<div class="t b" style="left:164.64px;top:467.80px;font-size:14.0px;font-weight:bold;transform:scaleX(1.0607);">Data  (D:)</div>
<div class="t" style="left:164.71px;top:487.50px;font-size:14.0px;transform:scaleX(0.9915);">931.39 GB NTFS</div>
<div class="t" style="left:165.70px;top:506.50px;font-size:14.0px;"><span class='k' style='font-size:1.0357em;display:inline-block;transform:scaleX(1.0000);transform-origin:0 0;margin-right:-0.00px'>正常</span> (<span class='j' style='font-size:1.1429em;display:inline-block;transform:scaleX(0.6529);transform-origin:0 0;margin-right:-27.77px'>ベーシック</span> <span class='j' style='font-size:1.1429em;display:inline-block;transform:scaleX(0.6529);transform-origin:0 0;margin-right:-16.66px'>データ</span> <span class='j' style='font-size:1.1429em;display:inline-block;transform:scaleX(0.6529);transform-origin:0 0;margin-right:-38.87px'>パーティション</span>)</div>
<div class="t" style="left:164.67px;top:619.00px;font-size:14.0px;transform:scaleX(1.0319);">260 MB</div>
<div class="t" style="left:165.70px;top:638.00px;font-size:14.0px;"><span class='k' style='font-size:1.0357em;display:inline-block;transform:scaleX(1.0000);transform-origin:0 0;margin-right:-0.00px'>正常</span> (EFI <span class='j' style='font-size:1.1429em;display:inline-block;transform:scaleX(0.6863);transform-origin:0 0;margin-right:-20.08px'>システム</span> <span class='j' style='font-size:1.1429em;display:inline-block;transform:scaleX(0.6863);transform-origin:0 0;margin-right:-5.02px'>パ</span></div>
<div class="t b" style="left:305.70px;top:599.00px;font-size:14.0px;font-weight:bold;transform:scaleX(0.9946);">Windows  (C:)</div>
<div class="t" style="left:304.71px;top:618.80px;font-size:14.0px;transform:scaleX(0.9915);">237.23 GB NTFS</div>
<div class="t" style="left:305.70px;top:638.00px;font-size:14.0px;"><span class='k' style='font-size:1.0357em;display:inline-block;transform:scaleX(1.0000);transform-origin:0 0;margin-right:-0.00px'>正常</span> (<span class='j' style='font-size:1.1429em;display:inline-block;transform:scaleX(0.6534);transform-origin:0 0;margin-right:-16.64px'>ブート</span>, <span class='j' style='font-size:1.1429em;display:inline-block;transform:scaleX(0.6534);transform-origin:0 0;margin-right:-16.64px'>ページ</span> <span class='j' style='font-size:1.1429em;display:inline-block;transform:scaleX(0.6534);transform-origin:0 0;margin-right:-22.18px'>ファイル</span>, <span class='j' style='font-size:1.1429em;display:inline-block;transform:scaleX(0.6534);transform-origin:0 0;margin-right:-27.73px'>クラッシュ</span> <span class='j' style='font-size:1.1429em;display:inline-block;transform:scaleX(0.6534);transform-origin:0 0;margin-right:-16.64px'>ダンプ</span>, <span class='j' style='font-size:1.1429em;display:inline-block;transform:scaleX(0.6534);transform-origin:0 0;margin-right:-22.18px'>ベーシッ</span></div>
<div class="t" style="left:617.85px;top:619.50px;font-size:14.0px;transform:scaleX(1.0509);">1000 MB</div>
<div class="t" style="left:618.90px;top:638.30px;font-size:14.0px;"><span class='k' style='font-size:1.0357em;display:inline-block;transform:scaleX(1.0000);transform-origin:0 0;margin-right:-0.00px'>正常</span> (<span class='k' style='font-size:1.0357em;display:inline-block;transform:scaleX(1.0000);transform-origin:0 0;margin-right:-0.00px'>回復</span><span class='j' style='font-size:1.1429em;display:inline-block;transform:scaleX(0.6554);transform-origin:0 0;margin-right:-38.60px'>パーティション</span>)</div>
<div class="t" style="left:165.19px;top:750.30px;font-size:14.0px;transform:scaleX(1.0082);">5589.03 GB</div>
<div class="t" style="left:165.20px;top:769.00px;font-size:14.0px;"><span class='k' style='font-size:1.0357em;display:inline-block;transform:scaleX(1.0000);transform-origin:0 0;margin-right:-0.00px'>未割</span><span class='j' style='font-size:1.1429em;display:inline-block;transform:scaleX(0.8094);transform-origin:0 0;margin-right:-3.05px'>り</span><span class='k' style='font-size:1.0357em;display:inline-block;transform:scaleX(1.0000);transform-origin:0 0;margin-right:-0.00px'>当</span><span class='j' style='font-size:1.1429em;display:inline-block;transform:scaleX(0.8094);transform-origin:0 0;margin-right:-3.05px'>て</span></div>
<div class="t" style="left:57.40px;top:834.30px;font-size:14.0px;"><span class='k' style='font-size:1.0357em;display:inline-block;transform:scaleX(1.0000);transform-origin:0 0;margin-right:-0.00px'>未割</span><span class='j' style='font-size:1.1429em;display:inline-block;transform:scaleX(0.8094);transform-origin:0 0;margin-right:-3.05px'>り</span><span class='k' style='font-size:1.0357em;display:inline-block;transform:scaleX(1.0000);transform-origin:0 0;margin-right:-0.00px'>当</span><span class='j' style='font-size:1.1429em;display:inline-block;transform:scaleX(0.8094);transform-origin:0 0;margin-right:-3.05px'>て</span></div>
<div class="t" style="left:149.40px;top:834.30px;font-size:14.0px;"><span class='j' style='font-size:1.1429em;display:inline-block;transform:scaleX(0.6495);transform-origin:0 0;margin-right:-28.04px'>プライマリ</span> <span class='j' style='font-size:1.1429em;display:inline-block;transform:scaleX(0.6495);transform-origin:0 0;margin-right:-39.26px'>パーティション</span></div>

</body></html>
